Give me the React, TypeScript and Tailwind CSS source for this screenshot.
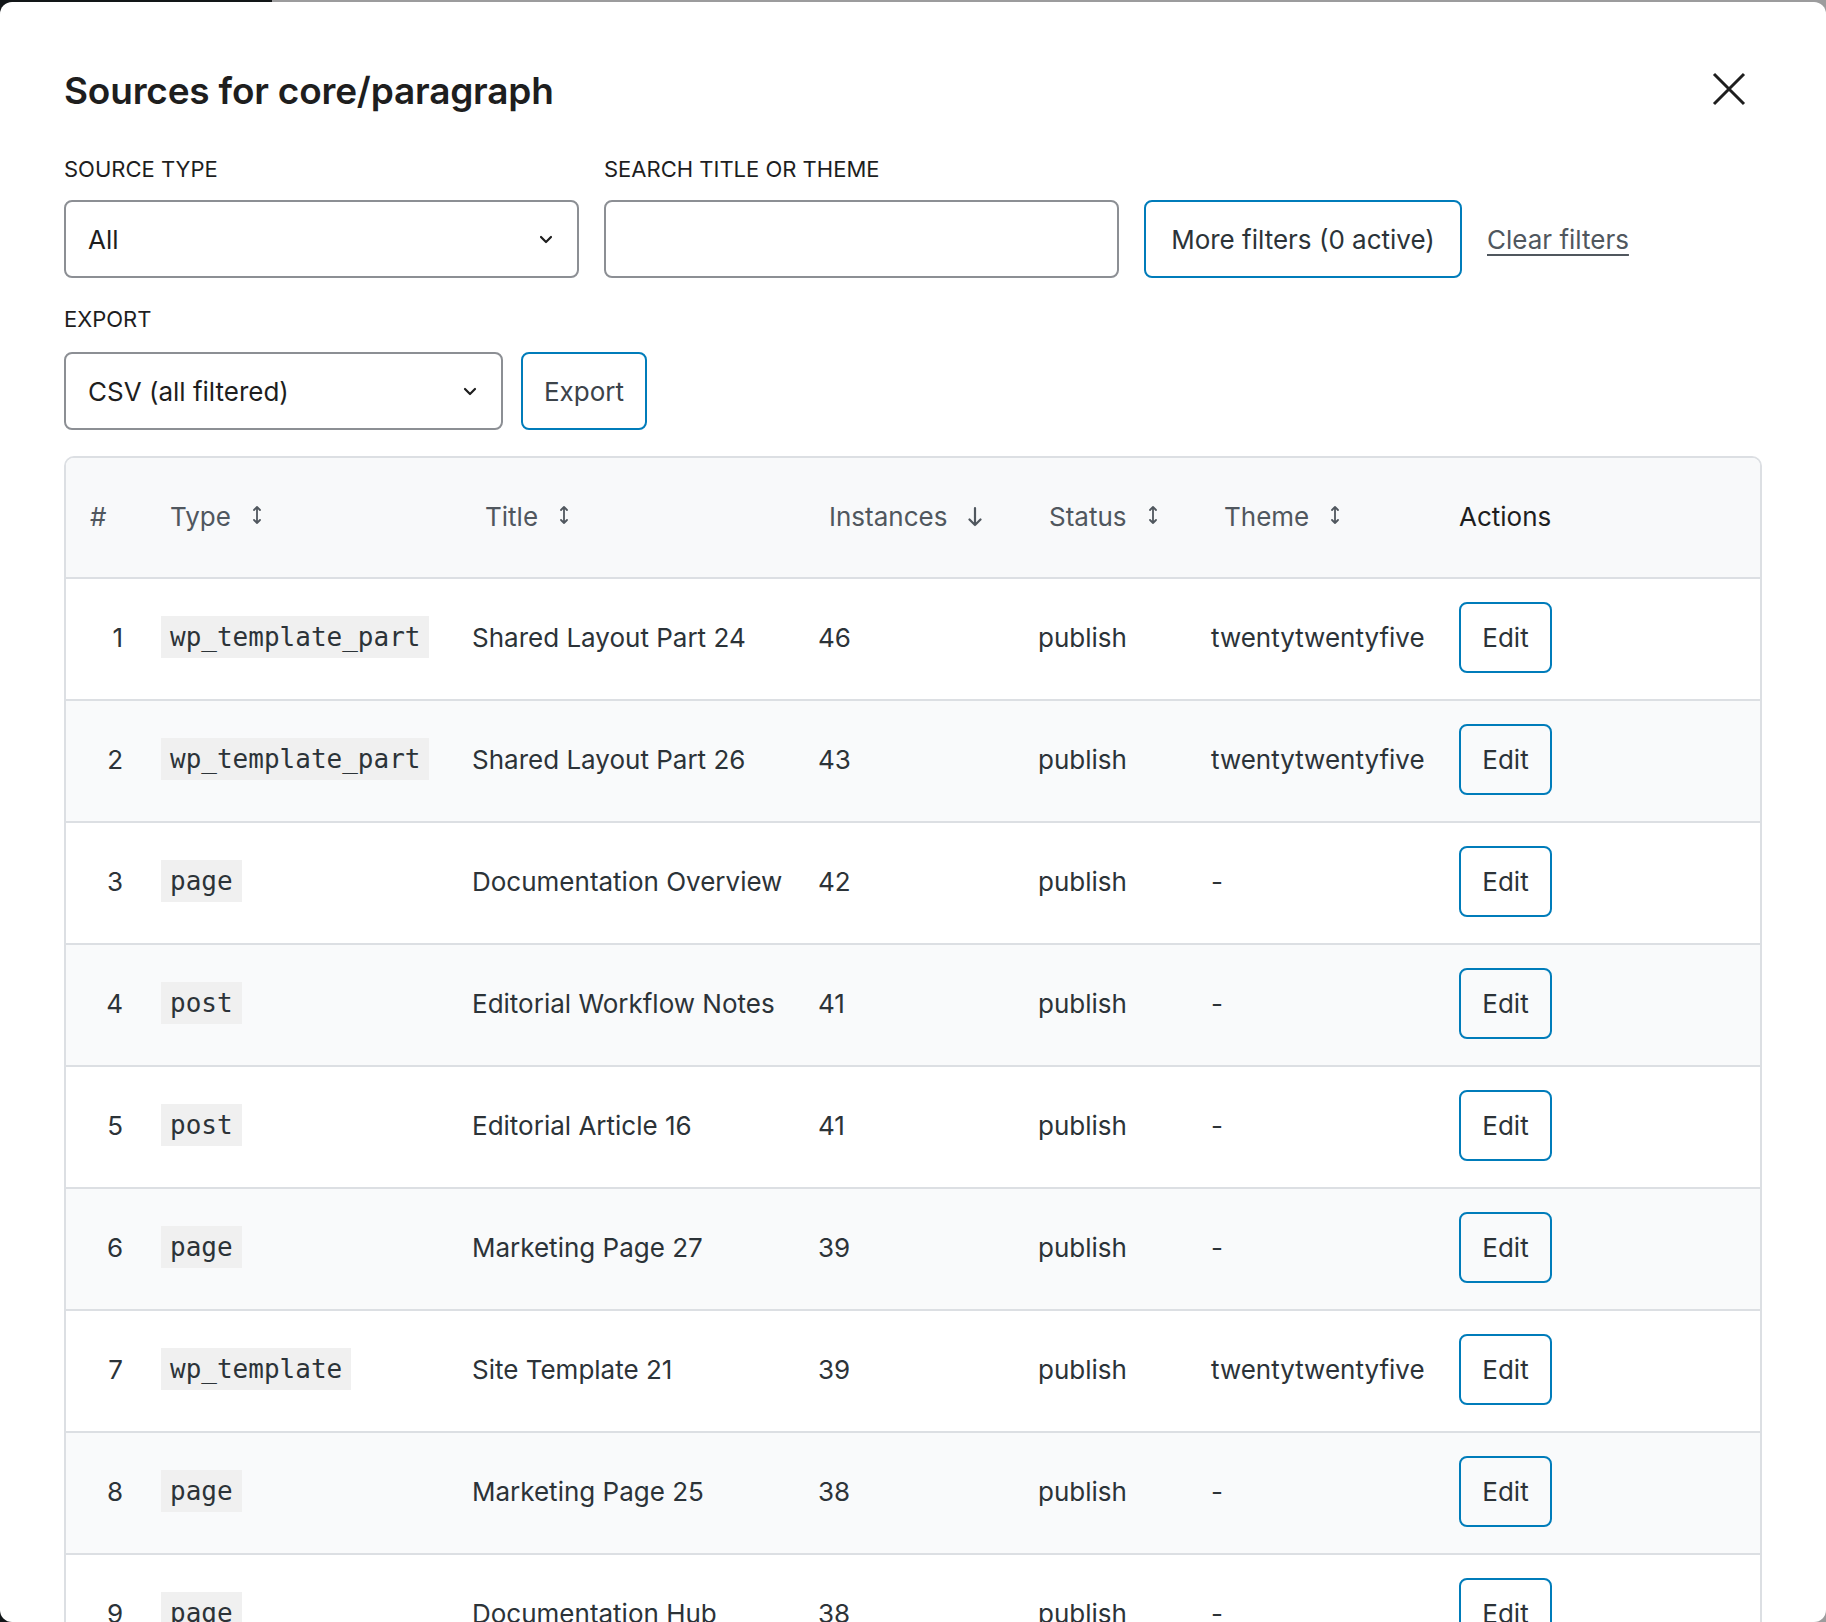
import { ReactNode } from "react";

type Row = {
  n: number;
  type: string;
  title: string;
  count: number;
  status: string;
  theme: string;
};

const rows: Row[] = [
  { n: 1, type: "wp_template_part", title: "Shared Layout Part 24", count: 46, status: "publish", theme: "twentytwentyfive" },
  { n: 2, type: "wp_template_part", title: "Shared Layout Part 26", count: 43, status: "publish", theme: "twentytwentyfive" },
  { n: 3, type: "page", title: "Documentation Overview", count: 42, status: "publish", theme: "-" },
  { n: 4, type: "post", title: "Editorial Workflow Notes", count: 41, status: "publish", theme: "-" },
  { n: 5, type: "post", title: "Editorial Article 16", count: 41, status: "publish", theme: "-" },
  { n: 6, type: "page", title: "Marketing Page 27", count: 39, status: "publish", theme: "-" },
  { n: 7, type: "wp_template", title: "Site Template 21", count: 39, status: "publish", theme: "twentytwentyfive" },
  { n: 8, type: "page", title: "Marketing Page 25", count: 38, status: "publish", theme: "-" },
  { n: 9, type: "page", title: "Documentation Hub", count: 38, status: "publish", theme: "-" },
  { n: 10, type: "page", title: "Documentation Index", count: 37, status: "publish", theme: "-" },
];

const gridCols = "grid grid-cols-[79px_311px_346px_220px_173px_248px_1fr]";

function Chevron() {
  return (
    <svg width="18" height="18" viewBox="0 0 18 18" fill="none" className="shrink-0">
      <path d="M4 7l5 5 5-5" stroke="#1e1e1e" strokeWidth="2.2" strokeLinecap="round" strokeLinejoin="round" />
    </svg>
  );
}

function SortBoth() {
  return (
    <svg width="12" height="20" viewBox="0 0 12 20" fill="none" className="shrink-0 -mt-1">
      <path d="M6 2v16M3 5l3-3 3 3M3 15l3 3 3-3" stroke="#50575e" strokeWidth="1.8" strokeLinecap="round" strokeLinejoin="round" />
    </svg>
  );
}

function SortDown() {
  return (
    <svg width="16" height="22" viewBox="0 0 16 22" fill="none" className="shrink-0">
      <path d="M8 2v17M2.5 13.5L8 19l5.5-5.5" stroke="#50575e" strokeWidth="2.2" strokeLinecap="round" strokeLinejoin="round" />
    </svg>
  );
}

function Label({ children }: { children: ReactNode }) {
  return <div className="text-[22px] leading-[28px] uppercase text-[#1e1e1e]">{children}</div>;
}

function HeaderCell({ label, icon, className }: { label: string; icon?: ReactNode; className: string }) {
  return (
    <div className={`flex items-center gap-[20px] text-[26px] ${className}`}>
      <span>{label}</span>
      {icon}
    </div>
  );
}

export default function App() {
  return (
    <div
      className="relative h-[1622px] w-[1826px] overflow-hidden bg-[#9c9c9d] text-[#1e1e1e]"
      style={{ fontFamily: "Inter, 'Noto Sans', sans-serif" }}
    >
      <div className="absolute left-0 top-0 h-full w-[272px] bg-[#121618]" />
      <div className="relative mt-[2px] h-[1620px] w-full overflow-hidden rounded-[12px] bg-white px-16 pt-[67px]">
        <div className="flex items-center justify-between">
          <h1 className="text-[37px] font-semibold leading-[44px] tracking-[-0.2px] text-[#1e1e1e]">
            Sources for core/paragraph
          </h1>
          <button className="mr-[16px] -mt-[4px]">
            <svg width="34" height="34" viewBox="0 0 34 34" fill="none">
              <path d="M2 2l30 30M32 2L2 32" stroke="#1e1e1e" strokeWidth="3" />
            </svg>
          </button>
        </div>

        <div className="mt-[42px] flex items-end gap-[25px]">
          <div className="flex flex-col gap-[17px]">
            <Label>Source type</Label>
            <div className="flex h-[78px] w-[515px] items-center justify-between rounded-[8px] border-2 border-[#8c8f94] pl-[22px] pr-[22px] text-[26px]">
              <span>All</span>
              <Chevron />
            </div>
          </div>
          <div className="flex flex-col gap-[17px]">
            <Label>Search title or theme</Label>
            <div className="h-[78px] w-[515px] rounded-[8px] border-2 border-[#8c8f94]" />
          </div>
          <button className="h-[78px] w-[318px] rounded-[8px] border-2 border-[#007cba] text-[26px] text-[#2c3338]">
            More filters (0 active)
          </button>
          <a className="flex h-[78px] items-center text-[26px] text-[#50575e] underline decoration-2 underline-offset-[5px]">
            Clear filters
          </a>
        </div>

        <div className="mt-[27px] flex flex-col gap-[19px]">
          <Label>Export</Label>
          <div className="flex gap-[18px]">
            <div className="flex h-[78px] w-[439px] items-center justify-between rounded-[8px] border-2 border-[#8c8f94] pl-[22px] pr-[22px] text-[26px]">
              <span>CSV (all filtered)</span>
              <Chevron />
            </div>
            <button className="h-[78px] w-[126px] rounded-[8px] border-2 border-[#007cba] text-[26px] text-[#3c434a]">
              Export
            </button>
          </div>
        </div>

        <div className="mt-[26px] overflow-hidden rounded-[10px] border-2 border-[#dcdfe3]">
          <div className={`${gridCols} h-[121px] items-center border-b-2 border-[#dcdfe3] bg-[#f8f9fa] pb-[2px] text-[#50575e]`}>
            <HeaderCell label="#" className="pl-[24px]" />
            <HeaderCell label="Type" icon={<SortBoth />} className="pl-[25px]" />
            <HeaderCell label="Title" icon={<SortBoth />} className="pl-[29px]" />
            <HeaderCell label="Instances" icon={<SortDown />} className="pl-[27px]" />
            <HeaderCell label="Status" icon={<SortBoth />} className="pl-[27px]" />
            <HeaderCell label="Theme" icon={<SortBoth />} className="pl-[29px]" />
            <HeaderCell label="Actions" className="pl-[16px] text-[#1e1e1e]" />
          </div>
          {rows.map((r) => (
            <div
              key={r.n}
              className={`${gridCols} h-[122px] items-center border-b-2 border-[#dcdfe3] pb-[4px] text-[26px] text-[#2c3338] ${
                r.n % 2 === 0 ? "bg-[#f9fafb]" : "bg-white"
              }`}
            >
              <div className="pr-[22px] text-right">{r.n}</div>
              <div className="pl-[16px]">
                <code
                  className="inline-block bg-[#f0f0f0] px-[9px] text-[26px] leading-[42px] text-[#2c3338]"
                  style={{ fontFamily: "'DejaVu Sans Mono', 'Liberation Mono', monospace" }}
                >
                  {r.type}
                </code>
              </div>
              <div className="pl-[16px]">{r.title}</div>
              <div className="pl-[16px]">{r.count}</div>
              <div className="pl-[16px]">{r.status}</div>
              <div className="pl-[16px]">{r.theme}</div>
              <div className="pl-[16px]">
                <button className="h-[71px] w-[93px] rounded-[8px] border-2 border-[#007cba] text-[26px] text-[#2c3338]">
                  Edit
                </button>
              </div>
            </div>
          ))}
        </div>
      </div>
    </div>
  );
}
